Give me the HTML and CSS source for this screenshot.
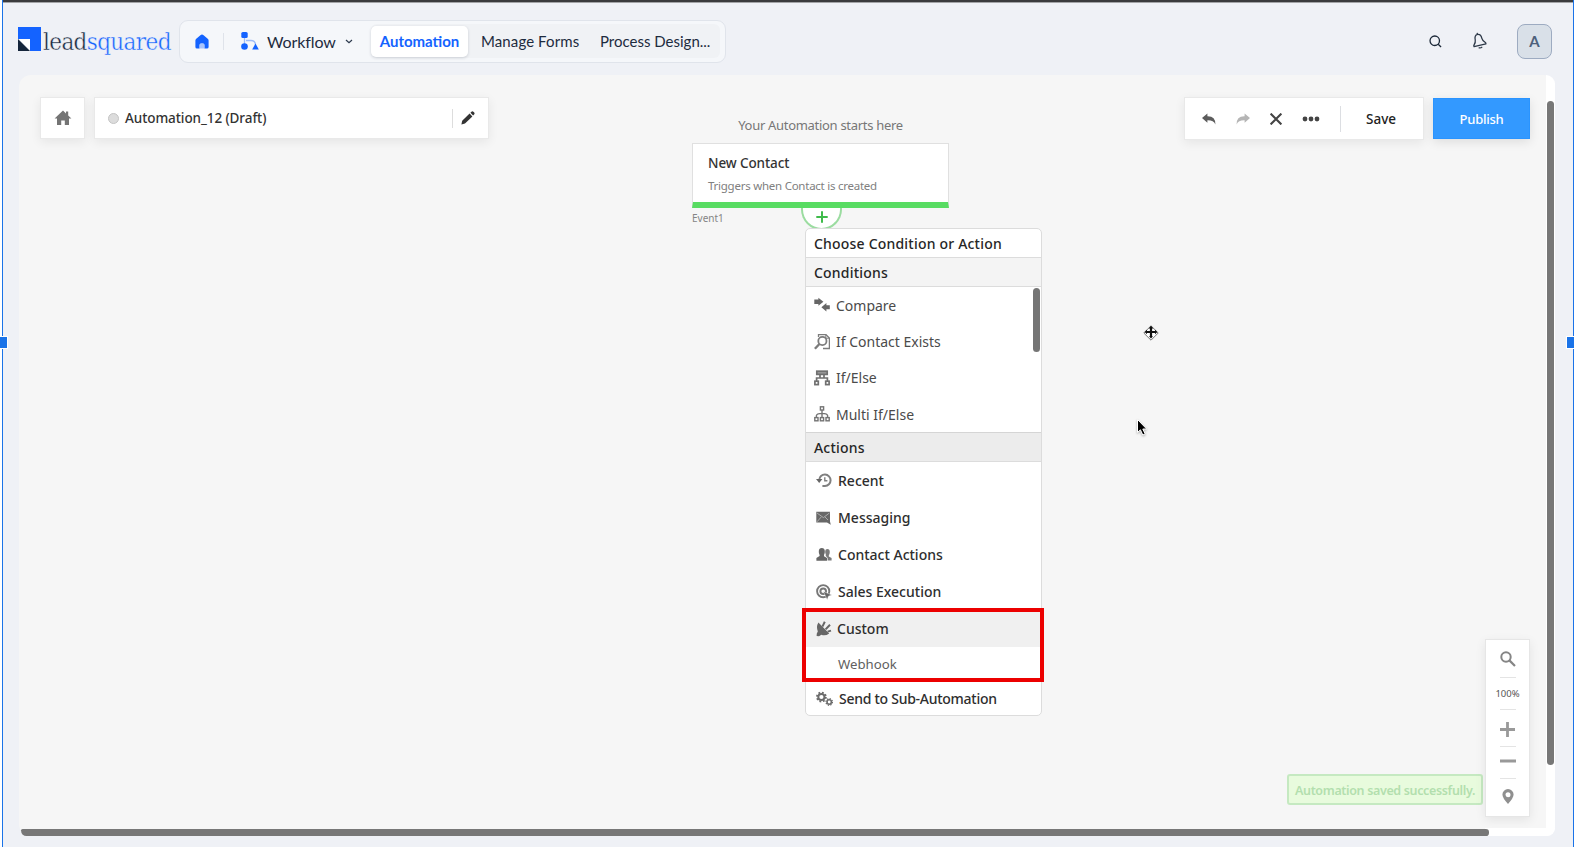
FILE: index.html
```html
<!DOCTYPE html>
<html lang="en">
  <head>
    <meta charset="UTF-8" />
    <meta name="viewport" content="width=device-width, initial-scale=1.0" />
    <title>Automation_12 - LeadSquared</title>
    <link rel="stylesheet" href="styles.css">
  </head>
  <body>
    <div class="page">
      <header class="header">
        <a class="logo" href="#">
          <svg width="24" height="24" viewBox="0 0 24 24">
            <path d="M0 0H23V24H12V12H0z" fill="#1463ff" />
            <path d="M1 12H12V23z" fill="#fff" />
            <path d="M0 12V24H12z" fill="#14253b" />
          </svg>
          <span class="logo-text">lead<b>squared</b></span>
        </a>
        <nav class="nav">
          <svg class="nav-home" width="14" height="15" viewBox="0 0 14 15">
            <path d="M7 0.4Q7.8 0.4 8.6 1.2L13 5Q13.6 5.6 13.6 6.6V13Q13.6 14.6 12 14.6H9.4V10.8Q9.4 9.4 7 9.4T4.6 10.8V14.6H2Q0.4 14.6 0.4 13V6.6Q0.4 5.6 1 5L5.4 1.2Q6.2 0.4 7 0.4z" fill="#1463ff" />
            <path d="M4.6 14.6V10.8Q4.6 9.4 7 9.4T9.4 10.8V14.6z" fill="#a9c4fb" />
          </svg>
          <span class="nav-line"></span>
          <svg class="nav-flow" width="18" height="18" viewBox="0 0 18 18">
            <path d="M3.5 5V12M5 8.5H10Q14.5 8.5 14.5 13" stroke="#9dbbf7" stroke-width="1.3" fill="none" />
            <rect x="0.3" y="0" width="6.4" height="6" rx="1.6" fill="#1463ff" />
            <circle cx="3.5" cy="14.5" r="3.3" fill="#1463ff" />
            <path d="M14.5 11.5L17.8 17.4H11.2z" fill="#1463ff" />
          </svg>
          <span class="nav-app">Workflow</span>
          <svg class="nav-chevron" width="8" height="5" viewBox="0 0 8 5">
            <path d="M1 1L4 3.8L7 1" stroke="#2c3a4d" stroke-width="1.2" fill="none" />
          </svg>
          <div class="tabs">
            <a class="tab active" href="#">Automation</a>
            <a class="tab forms" href="#">Manage Forms</a>
            <a class="tab process" href="#">Process Design...</a>
          </div>
        </nav>
        <div class="header-right">
          <svg width="13" height="13" viewBox="0 0 14 14">
            <circle cx="6.2" cy="6.2" r="5.1" stroke="#1b2838" stroke-width="1.4" fill="none" />
            <path d="M9.9 9.9L13 13" stroke="#1b2838" stroke-width="1.4" />
          </svg>
          <svg class="bell" width="16" height="18" viewBox="0 0 16 18">
            <g transform="rotate(-13 8 9)" stroke="#2c3847" stroke-width="1.3" fill="none" stroke-linejoin="round">
              <path d="M8 2.2Q4.6 2.5 4.6 7Q4.6 9.6 1.9 12.2V13.4H14.1V12.2Q11.4 9.6 11.4 7Q11.4 2.5 8 2.2zM8 2.2V0.6M6.2 15.4Q8 16.6 9.8 15.4" />
            </g>
          </svg>
          <div class="avatar">A</div>
        </div>
      </header>

      <main class="canvas">
        <div class="toolbar">
          <div class="box home-box">
            <svg width="18" height="16" viewBox="0 0 18 16">
              <path d="M9 0.6L12 3.4V1.6H14.2V5.4L17.4 8.6H15V15H10.8V10.4H7.2V15H3V8.6H0.6z" fill="#747474" />
            </svg>
          </div>
          <div class="box name-box">
            <span class="status-dot"></span>
            <span class="name">Automation_12 (Draft)</span>
            <span class="name-line"></span>
            <svg width="14" height="14" viewBox="0 0 14 14">
              <path d="M0.4 13.6L1.2 9.8L8.6 2.6L11.4 5.4L4 12.6zM9.4 1.8L10.8 0.6Q11.6 0 12.4 0.8L13.2 1.6Q14 2.4 13.3 3.3L12.1 4.6z" fill="#333" />
            </svg>
          </div>
          <div class="box actions-box">
            <svg width="14" height="12" viewBox="0 0 14 12">
              <path d="M0 5L5.4 0.4V3.2Q13.6 3 13.4 11.4Q11.6 7 5.4 7.2V9.8z" fill="#5c5c5c" />
            </svg>
            <svg width="14" height="12" viewBox="0 0 14 12">
              <path d="M14 5L8.6 0.4V3.2Q0.4 3 0.6 11.4Q2.4 7 8.6 7.2V9.8z" fill="#b5b5b5" />
            </svg>
            <svg width="12" height="12" viewBox="0 0 12 12">
              <path d="M0.6 0.6L11.4 11.4M11.4 0.6L0.6 11.4" stroke="#444" stroke-width="2.1" />
            </svg>
            <svg width="18" height="6" viewBox="0 0 18 6">
              <g fill="#444">
                <circle cx="3" cy="3" r="2.4" />
                <circle cx="9" cy="3" r="2.4" />
                <circle cx="15" cy="3" r="2.4" />
              </g>
            </svg>
            <span class="actions-line"></span>
            <span class="save">Save</span>
          </div>
          <button class="publish">Publish</button>
        </div>

        <div class="flow">
          <p class="flow-title">Your Automation starts here</p>
          <div class="node">
            <h2>New Contact</h2>
            <p>Triggers when Contact is created</p>
          </div>
          <span class="node-label">Event1</span>
          <div class="add">
            <svg width="12" height="12" viewBox="0 0 12 12">
              <path d="M6 0.3V11.7M0.3 6H11.7" stroke="#3fbb4b" stroke-width="2" />
            </svg>
          </div>
        </div>

        <div class="menu">
          <div class="menu-title">Choose Condition or Action</div>
          <div class="menu-head">Conditions</div>
          <ul class="conditions">
            <li>
              <svg width="16" height="16" viewBox="0 0 16 16">
                <path d="M0.3 2.6H4.4V0.8L9.4 4.8L4.4 8.8V7H0.3z" fill="#666" />
                <path d="M15.8 8.2H12.4V6L7.4 10.2L12.4 14.4V12.2H15.8z" fill="#666" />
              </svg>
              <span>Compare</span>
            </li>
            <li>
              <svg width="16" height="16" viewBox="0 0 16 16" fill="none" stroke="#7c7c7c">
                <path d="M4.5 3V0.7H12L15.4 4V14.5H9" stroke-width="1.3" />
                <path d="M11.8 0.7V4.2H15.4" />
                <circle cx="8.4" cy="7" r="4.1" stroke-width="1.8" />
                <path d="M5.4 10L0.9 14.8" stroke-width="2.4" />
              </svg>
              <span>If Contact Exists</span>
            </li>
            <li>
              <svg width="16" height="16" viewBox="0 0 16 16" fill="none" stroke="#707070">
                <rect x="2.8" y="1.2" width="10.4" height="3.2" fill="#999" stroke-width="1.7" />
                <path d="M6 4.5V8M10 4.5V8M2.6 11V8H13.4V11" stroke-width="1.7" />
                <rect x="0.9" y="11.2" width="3.4" height="3.4" stroke-width="1.7" />
                <rect x="11.7" y="11.2" width="3.4" height="3.4" stroke-width="1.7" />
              </svg>
              <span>If/Else</span>
            </li>
            <li>
              <svg width="16" height="16" viewBox="0 0 16 16" fill="none" stroke="#747474" stroke-width="1.4">
                <rect x="6.4" y="0.8" width="3.2" height="3.2" />
                <path d="M8 4V11.4M2.4 11.4V9.6Q2.6 7.6 8 7.4Q13.4 7.6 13.6 9.6V11.4" />
                <rect x="0.8" y="11.6" width="3.2" height="3.2" />
                <rect x="6.4" y="11.6" width="3.2" height="3.2" />
                <rect x="12" y="11.6" width="3.2" height="3.2" />
              </svg>
              <span>Multi If/Else</span>
            </li>
          </ul>
          <div class="menu-head dark">Actions</div>
          <ul class="actions">
            <li>
              <svg width="16" height="16" viewBox="0 0 16 16" fill="none" stroke="#808080">
                <path d="M3.2 7A5.7 5.7 0 1 1 9 13H6.4" stroke-width="2" />
                <path d="M0 6H6.4L3.2 10z" fill="#666" stroke="none" />
                <path d="M8.8 4.2V7.8H11.4" stroke-width="1.4" />
              </svg>
              <span>Recent</span>
            </li>
            <li>
              <svg width="16" height="16" viewBox="0 0 16 16">
                <path d="M0.3 1.8H14V11.4L14.8 14.8L11 12.6H0.3z" fill="#686868" />
                <path d="M1 3L7.4 7.6L13.4 3M1 11.8L5.2 7M9 7L12 10" stroke="#bdbdbd" stroke-width="0.8" fill="none" />
              </svg>
              <span>Messaging</span>
            </li>
            <li>
              <svg width="16" height="16" viewBox="0 0 16 16" fill="#666">
                <path d="M9.6 8.8Q10.2 8 9.2 5.4Q9 2 11.4 2T13.8 5Q13.8 7 12.8 8.4V9.6L15.6 11V13.4H11.6V11z" fill="#7c7c7c" />
                <path d="M3.6 9V8Q2.6 6.6 2.8 4Q3 1 5.8 1T8.8 4Q9 6.6 8 8V9.2L11 11V13.8H0.4V11z" />
              </svg>
              <span>Contact Actions</span>
            </li>
            <li>
              <svg width="16" height="16" viewBox="0 0 16 16" fill="none" stroke="#777">
                <circle cx="7.2" cy="7.2" r="6.1" stroke-width="1.9" />
                <circle cx="7.2" cy="7.2" r="2.8" stroke-width="2" />
                <path d="M7.4 7.4L15.8 11L12.4 12.2L11.2 15.8z" fill="#666" stroke="#fff" stroke-width="0.4" />
              </svg>
              <span>Sales Execution</span>
            </li>
            <li class="selected">
              <svg width="16" height="16" viewBox="0 0 16 16">
                <path d="M2.4 1.6L13.2 12.4Q9.4 15.4 5.4 13.8L3 15.2L0.6 15L0.8 12.4L1.8 10.4Q0 5.6 2.4 1.6z" fill="#666" />
                <path d="M6.4 5.6L8.8 0.8M9.6 8.4L14 3.8M11.6 10.6L15 9.6" stroke="#666" stroke-width="2" />
              </svg>
              <span>Custom</span>
            </li>
            <li class="sub"><span>Webhook</span></li>
            <li class="last">
              <svg width="17" height="16" viewBox="0 0 17 16" fill="none" stroke="#6c6c6c">
                <circle cx="5.4" cy="6" r="4.5" stroke-width="1.8" stroke-dasharray="1.8 1.73" />
                <circle cx="5.4" cy="6" r="3.1" stroke-width="2" />
                <circle cx="13.2" cy="11" r="3.3" stroke-width="1.2" stroke-dasharray="1.3 1.29" />
                <circle cx="13.2" cy="11" r="2.2" stroke-width="1.6" />
              </svg>
              <span>Send to Sub-Automation</span>
            </li>
          </ul>
          <span class="menu-thumb"></span>
          <span class="highlight"></span>
        </div>

        <svg class="move-cursor" width="16" height="16" viewBox="0 0 16 16">
          <path d="M8 0.8L15.2 8L8 15.2L0.8 8z" fill="#fff" stroke="#777" stroke-width="1" />
          <path d="M8 3V12M3 7H13" stroke="#111" stroke-width="2.2" />
          <path d="M8 0.8L10.4 3.6H5.6zM8 13.4L10 11.2H6zM1.6 7L4 4.8V9.2zM14.4 7L12 4.8V9.2z" fill="#111" />
        </svg>
        <svg class="cursor" width="14" height="20" viewBox="0 0 14 20">
          <path d="M1.5 1.5V14.5L4.4 11.8L6.8 17L9.2 15.9L6.8 11H10.7z" fill="#000" stroke="#fff" stroke-width="1" />
        </svg>

        <div class="toast">Automation saved successfully.</div>

        <div class="zoom">
          <div class="zoom-item search">
            <svg width="16" height="16" viewBox="0 0 16 16" fill="none" stroke="#858585">
              <circle cx="6" cy="6" r="4.7" stroke-width="2" />
              <path d="M9.4 9.4L15 15" stroke-width="2.2" />
            </svg>
          </div>
          <div class="zoom-item percent">100%</div>
          <div class="zoom-item plus">
            <svg width="15" height="15" viewBox="0 0 15 15">
              <path d="M7.5 0V15M0 7.5H15" stroke="#999" stroke-width="2.8" />
            </svg>
          </div>
          <div class="zoom-item minus">
            <svg width="16" height="4" viewBox="0 0 16 4">
              <path d="M0 2H16" stroke="#999" stroke-width="3" />
            </svg>
          </div>
          <div class="zoom-item pin">
            <svg width="12" height="15" viewBox="0 0 12 15">
              <path d="M6 0A5.6 5.6 0 0 0 0.4 5.6Q0.4 9 6 15Q11.6 9 11.6 5.6A5.6 5.6 0 0 0 6 0zM6 3.2A2.5 2.5 0 1 1 6 8.2A2.5 2.5 0 0 1 6 3.2z" fill="#8f8f8f" />
            </svg>
          </div>
        </div>

        <span class="track-y"></span>
        <span class="track-x"></span>
        <span class="thumb-y"></span>
        <span class="thumb-x"></span>
      </main>
    </div>
    <span class="handle handle-left"></span>
    <span class="handle handle-right"></span>
    <span class="handle-bottom"></span>
  </body>
</html>
```
FILE: styles.css
```css
* {
  margin: 0;
  padding: 0;
  box-sizing: border-box;
}

body {
  position: relative;
  width: 1574px;
  height: 848px;
  overflow: hidden;
  background: #fff;
  font-family: "Noto Sans", "Open Sans", sans-serif;
  color: #333;
}

svg {
  display: block;
  flex: none;
}

a {
  text-decoration: none;
  color: inherit;
}

ul {
  list-style: none;
}

span,
a {
  white-space: nowrap;
}

.page {
  height: 847px;
  margin-left: 2px;
  border-left: 1px solid #1a73e8;
  border-right: 1px solid #1a73e8;
  background: #eff1f6;
}

/* Header */
.header {
  display: flex;
  align-items: center;
  height: 75px;
  padding: 5px 21px 0 15px;
  border-top: 2px solid #3b3b3d;
  box-shadow: inset 0 1px 0 #a3a4a7;
}

.logo {
  display: flex;
  width: 161px;
  height: 28px;
}

.logo svg {
  margin-top: 0;
}

.logo-text {
  margin-left: 1px;
  font-family: "DejaVu Serif Condensed", "DejaVu Serif", serif;
  font-stretch: condensed;
  font-size: 24px;
  line-height: 30px;
  letter-spacing: -0.65px;
  color: #14253b;
  -webkit-text-stroke: 0.4px #eff1f6;
}

.logo-text b {
  font-weight: 400;
  color: #1463ff;
}

.nav {
  display: flex;
  align-items: center;
  width: 547px;
  height: 43px;
  padding-left: 15px;
  border: 1px solid #e0e4eb;
  border-radius: 9px;
  background: #f5f7fa;
  font-family: Lato, sans-serif;
  font-size: 15px;
  color: #1d2b3e;
}

.nav-line {
  width: 1px;
  height: 17px;
  margin: 0 17px 0 14px;
  background: #dfe3ea;
}

.nav-app {
  width: 68px;
  margin: 0 10px 0 8px;
  font-size: 16px;
  letter-spacing: -0.1px;
}

.tabs {
  display: flex;
  align-items: center;
  width: 349px;
  height: 34px;
  margin-left: 18px;
  border-radius: 6px;
  background: #f0f2f5;
}

.tab {
  line-height: 31px;
}

.tab.active {
  width: 97px;
  height: 31px;
  border-radius: 5px;
  background: #fff;
  box-shadow: 0 1px 3px rgba(30, 40, 60, 0.18);
  text-align: center;
  font-weight: 700;
  color: #1463ff;
}

.forms {
  width: 97px;
  margin: 0 22px 0 13px;
  letter-spacing: 0.1px;
}

.header-right {
  display: flex;
  align-items: center;
  margin-left: auto;
}

.bell {
  margin: 0 30px 0 29px;
}

.avatar {
  width: 35px;
  height: 35px;
  border: 1px solid #9dabc1;
  border-radius: 8px;
  background: #d9e0e8;
  font: 700 15px/33px Lato, sans-serif;
  text-align: center;
  color: #4d607b;
}

/* Canvas */
.canvas {
  position: relative;
  width: 1536px;
  height: 761px;
  margin-left: 16px;
  border-radius: 12px;
  background: #f6f6f6;
}

.toolbar {
  display: flex;
  align-items: flex-start;
  padding: 22px 25px 0 21px;
}

.box {
  display: flex;
  align-items: center;
  height: 42px;
  border: 1px solid #e9e9e9;
  background: #fff;
  box-shadow: 0 3px 10px rgba(0, 0, 0, 0.07);
}

.home-box {
  width: 45px;
  justify-content: center;
  margin-right: 9px;
}

.name-box {
  width: 395px;
  padding: 0 13px 0 13px;
}

.status-dot {
  width: 11px;
  height: 11px;
  margin-right: 6px;
  border: 1px solid #c4c4c4;
  border-radius: 50%;
  background: #dcdcdc;
}

.name {
  font-size: 13.5px;
  font-weight: 500;
  letter-spacing: -0.08px;
  color: #333;
}

.name-line {
  width: 1px;
  height: 19px;
  margin: 0 8px 0 auto;
  background: #ddd;
}

.actions-box {
  width: 240px;
  height: 43px;
  margin: 0 9px 0 auto;
  padding-left: 17px;
  gap: 20px;
}

.actions-line {
  width: 1px;
  height: 26px;
  background: #dcdee2;
}

.save {
  margin-left: 5px;
  font-size: 13.5px;
  font-weight: 500;
  color: #222;
}

.publish {
  width: 97px;
  height: 41px;
  margin-top: 1px;
  border: 1px solid #2a94ff;
  background: #3399ff;
  box-shadow: 0 3px 10px rgba(0, 0, 0, 0.1);
  font: 500 13px "Noto Sans", sans-serif;
  letter-spacing: -0.25px;
  color: #fff;
}

/* Flow on the canvas */
.flow {
  position: absolute;
  left: 673px;
  top: 41px;
  width: 257px;
}

.flow-title {
  height: 27px;
  font-size: 13px;
  line-height: 19px;
  letter-spacing: -0.3px;
  text-align: center;
  color: #777;
}

.node {
  height: 65px;
  padding: 9px 15px 0;
  border: 1px solid #e0e0e0;
  border-bottom: 6px solid #58dc62;
  background: #fff;
}

.node h2 {
  font-size: 13.5px;
  font-weight: 500;
  line-height: 20px;
  letter-spacing: -0.1px;
  color: #333;
}

.node p {
  margin-top: 4px;
  font-size: 11.5px;
  line-height: 18px;
  letter-spacing: -0.25px;
  color: #808080;
}

.node-label {
  display: block;
  font-size: 10px;
  line-height: 20px;
  color: #858585;
}

.add {
  position: absolute;
  left: 109px;
  top: 92px;
  width: 41px;
  height: 22px;
  padding: 3px 0 0 13px;
  border: 2px solid #9bdca0;
  border-top: none;
  border-radius: 0 0 21px 21px;
  background: #fff;
}

/* Condition / action menu */
.menu {
  position: absolute;
  left: 786px;
  top: 153px;
  width: 237px;
  height: 488px;
  border: 1px solid #dcdcdc;
  border-radius: 5px;
  background: #fff;
  font-size: 14px;
}

.menu-title,
.menu-head {
  height: 29px;
  padding-left: 8px;
  border-bottom: 1px solid #dcdcdc;
  font-weight: 500;
  line-height: 29px;
  letter-spacing: 0.2px;
  color: #262626;
}

.menu-head {
  background: #f4f4f4;
}

.menu-head.dark {
  height: 30px;
  border-top: 1px solid #d5d5d5;
  background: #ececec;
}

.conditions {
  height: 145px;
}

.conditions li,
.actions li {
  display: flex;
  align-items: center;
  height: 36.4px;
  padding-left: 8px;
  color: #4b4b4b;
}

.conditions li span {
  margin-left: 6px;
}

.actions li {
  height: 37px;
  padding-left: 10px;
  font-weight: 500;
  color: #2e2e2e;
}

.actions li span {
  margin-left: 6px;
}

.actions li.selected {
  background: #f0f0f0;
}

.actions li.selected span {
  margin-left: 5px;
}

.actions li.sub {
  height: 33px;
  padding-left: 26px;
  font-size: 13.2px;
  font-weight: 400;
  color: #606060;
}

.actions li.last {
  letter-spacing: -0.27px;
}

.menu-thumb {
  position: absolute;
  right: 1px;
  top: 59px;
  width: 7px;
  height: 64px;
  border-radius: 4px;
  background: #757575;
}

.highlight {
  position: absolute;
  left: -4px;
  top: 379px;
  width: 242px;
  height: 74px;
  border: 4px solid #ec0000;
}

.move-cursor {
  position: absolute;
  left: 1124px;
  top: 250px;
}

.cursor {
  position: absolute;
  left: 1117px;
  top: 343px;
  filter: drop-shadow(0 1px 1px rgba(0, 0, 0, 0.3));
}

.toast {
  position: absolute;
  left: 1268px;
  top: 699px;
  width: 196px;
  height: 31px;
  border: 2px solid #c5e9c1;
  border-radius: 3px;
  background: #e8fbdd;
  font-size: 12.5px;
  font-weight: 600;
  line-height: 29px;
  letter-spacing: -0.35px;
  text-align: center;
  white-space: nowrap;
  color: #b3dfae;
}

/* Zoom controls */
.zoom {
  position: absolute;
  left: 1466px;
  top: 564px;
  width: 45px;
  height: 178px;
  border: 1px solid #e6e6e6;
  background: #fff;
  box-shadow: 0 3px 10px rgba(0, 0, 0, 0.08);
}

.zoom-item {
  display: flex;
  justify-content: center;
  align-items: center;
  width: 16px;
  margin: 0 auto;
  border-bottom: 1px solid #e4e4e4;
}

.search {
  height: 38px;
}

.percent {
  height: 32px;
  font-size: 9.5px;
  color: #555;
}

.plus {
  height: 37px;
  padding-top: 2px;
}

.minus {
  height: 32px;
  padding-bottom: 3px;
}

.pin {
  height: 34px;
  border-bottom: none;
}

/* Scrollbars */
.track-y {
  position: absolute;
  right: 0;
  top: 0;
  width: 9px;
  height: 761px;
  border-radius: 0 10px 10px 0;
  background: #fff;
}

.track-x {
  position: absolute;
  right: 0;
  bottom: 0;
  width: 70px;
  height: 8px;
  border-radius: 0 0 10px 0;
  background: #fff;
}

.thumb-y {
  position: absolute;
  right: 1px;
  top: 26px;
  width: 7px;
  height: 664px;
  border-radius: 4px;
  background: #777;
}

.thumb-x {
  position: absolute;
  left: 2px;
  bottom: 0;
  width: 1468px;
  height: 7px;
  border-radius: 2px 4px 4px 7px;
  background: #777;
}

/* Selection handles */
.handle {
  position: absolute;
  top: 336px;
  width: 8px;
  height: 13px;
  border: 1px solid #fff;
  background: #1a73e8;
}

.handle-left {
  left: 0;
  border-left: none;
}

.handle-right {
  right: 0;
  border-right: none;
}

.handle-bottom {
  position: absolute;
  left: 781px;
  bottom: 0;
  width: 13px;
  height: 1px;
  background: #fff;
}
```
